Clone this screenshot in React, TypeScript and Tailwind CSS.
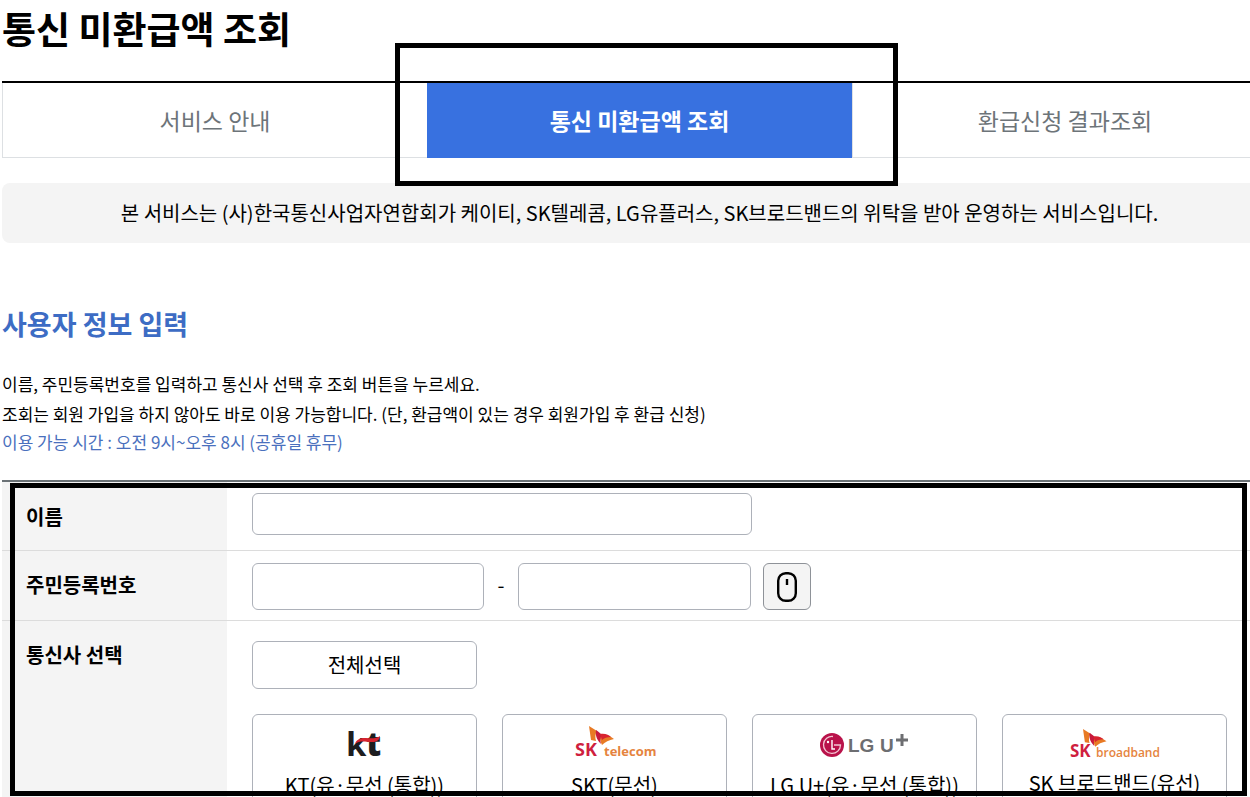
import React, { useState } from 'react';

const KtLogo = () => (
  <svg width="100" height="40" viewBox="0 0 100 40" className="overflow-visible" role="img" aria-label="kt">
    <text x="31" y="32" fontSize="33" fontWeight="700" fill="#1d1d1f" fontFamily="'Open Sans', sans-serif">k</text>
    <text x="51" y="32" fontSize="33" fontWeight="800" fill="#1d1d1f" fontFamily="'Open Sans', sans-serif">t</text>
    <path d="M40 20c1-4 5-6.500 11-6 6 .500 11 .500 14-2-.500 4-3 6-8 6-7 0-12-2-17 2z" fill="#d5232f" />
  </svg>
);

const SkWings = () => (
  <>
    <path d="M0 0L8 5C6 8 6 12 7 15L2 14Z" fill="#e87a24" />
    <path d="M7 4C10 6 12 8 14 10C12 11 11 14 12 18C9 15 6 11 7 4Z" fill="#c8193c" />
    <path d="M13 9C17 8 21 10 25 13C20 14 16 16 13 19C11 15 11 11 13 9Z" fill="#e87a24" />
    <path d="M11 8C16 7 20 9 22 11C18 11 15 12 13 14Z" fill="#d8232f" />
  </>
);

const SkTelecomLogo = () => (
  <svg width="100" height="40" viewBox="0 0 100 40" className="overflow-visible" role="img" aria-label="SK telecom">
    <g transform="translate(24 2)">
      <SkWings />
    </g>
    <text x="10" y="32" fontSize="18" fontWeight="700" fill="#cf1f3f" fontFamily="'Open Sans', sans-serif">SK</text>
    <text x="39" y="32" fontSize="13" fontWeight="700" fill="#e58440" fontFamily="'Open Sans', sans-serif">telecom</text>
  </svg>
);

const LgLogo = () => (
  <svg width="100" height="40" viewBox="0 0 100 40" className="overflow-visible" role="img" aria-label="LG U+">
    <circle cx="17" cy="21" r="12" fill="#b9124a" />
    <path d="M18 12.500A8.500 8.500 0 1 0 25.500 21H19" fill="none" stroke="#f3c6d3" strokeWidth="1.300" />
    <path d="M17 16v9h3" fill="none" stroke="#fff" strokeWidth="1.400" />
    <circle cx="13" cy="18" r="1.200" fill="#fff" />
    <text x="33" y="28" fontSize="19" fontWeight="700" fill="#6d6e71" fontFamily="'Liberation Sans', sans-serif">LG</text>
    <text x="65" y="28" fontSize="19" fontWeight="700" fill="#6d6e71" fontFamily="'Liberation Sans', sans-serif">U</text>
    <path d="M81 16h12M87 10v12" stroke="#6d6e71" strokeWidth="3" />
  </svg>
);

const SkBroadbandLogo = () => (
  <svg width="100" height="38" viewBox="0 0 100 38" className="overflow-visible" role="img" aria-label="SK broadband">
    <g transform="translate(18 5) scale(0.940)">
      <SkWings />
    </g>
    <text x="5" y="33" fontSize="17" fontWeight="700" fill="#cf1f3f" fontFamily="'Open Sans', sans-serif">SK</text>
    <text x="31" y="33" fontSize="12" fontWeight="600" fill="#e58440" fontFamily="'Open Sans', sans-serif">broadband</text>
  </svg>
);

const tabs = ['서비스 안내', '통신 미환급액 조회', '환급신청 결과조회'];

const carriers = [
  { id: 'kt', label: 'KT(유·무선 (통합))', Logo: KtLogo },
  { id: 'skt', label: 'SKT(무선)', Logo: SkTelecomLogo },
  { id: 'lgu', label: 'LG U+(유·무선 (통합))', Logo: LgLogo },
  { id: 'skb', label: 'SK 브로드밴드(유선)', Logo: SkBroadbandLogo },
];

const inputClass = 'rounded-md border border-[#adb1b9] bg-white px-3 text-xl outline-none focus:border-[#3871e0]';
const labelClass = 'w-[225px] shrink-0 bg-[#f4f4f4] pl-6 text-xl leading-[30px] font-bold';

const App: React.FC = () => {
  const [activeTab, setActiveTab] = useState(1);
  const [name, setName] = useState('');
  const [selected, setSelected] = useState<string[]>([]);

  const toggleCarrier = (id: string) => {
    setSelected(prev => (prev.includes(id) ? prev.filter(item => item !== id) : [...prev, id]));
  };

  const toggleAll = () => {
    setSelected(prev => (prev.length === carriers.length ? [] : carriers.map(carrier => carrier.id)));
  };

  return (
    <div className="h-screen overflow-hidden bg-white font-['Noto_Sans_CJK_KR',sans-serif] text-black">
      <main className="-mr-[27px] ml-0.5 flex h-full flex-col">
        <h1 className="pb-[25px] text-[37px] leading-14 font-bold">통신 미환급액 조회</h1>

        {/* Tabs */}
        <nav className="grid shrink-0 grid-cols-3 border-t-2 border-black">
          {tabs.map((tab, index) => (
            <div key={tab} className="relative">
              <button
                type="button"
                onClick={() => setActiveTab(index)}
                className={`h-[75px] w-full text-[23px] ${
                  activeTab === index
                    ? 'bg-[#3871e0] font-bold text-white'
                    : 'border-b border-l border-[#dde0e3] text-[#6d7479]'
                }`}
              >
                {tab}
              </button>
              {index === 1 && (
                <div className="pointer-events-none absolute -top-10 -right-[46px] -bottom-7 -left-8 z-10 border-5 border-black"></div>
              )}
            </div>
          ))}
        </nav>

        <p className="mt-[25px] shrink-0 rounded-lg bg-[#f4f4f4] text-center text-xl leading-[60px]">
          본 서비스는 (사)한국통신사업자연합회가 케이티, SK텔레콤, LG유플러스, SK브로드밴드의 위탁을 받아 운영하는 서비스입니다.
        </p>

        <h2 className="mt-[61px] text-[27px] leading-10 font-bold text-[#3d6cc4]">사용자 정보 입력</h2>
        <div className="mt-[25px] text-[17px] leading-[30px]">
          <p>이름, 주민등록번호를 입력하고 통신사 선택 후 조회 버튼을 누르세요.</p>
          <p>조회는 회원 가입을 하지 않아도 바로 이용 가능합니다. (단, 환급액이 있는 경우 회원가입 후 환급 신청)</p>
          <p className="leading-[26px] text-[#4a70bd]">이용 가능 시간 : 오전 9시~오후 8시 (공휴일 휴무)</p>
        </div>

        {/* User form */}
        <form className="relative mt-[25px] min-h-0 flex-1 border-t-2 border-[#6b7276]" onSubmit={e => e.preventDefault()}>
          <div className="flex h-full flex-col overflow-hidden">
            <div className="flex shrink-0 border-b border-[#dcdcdc]">
              <label htmlFor="name" className={`${labelClass} pt-5`}>이름</label>
              <div className="px-[25px] pt-[11px] pb-[15px]">
                <input
                  id="name"
                  type="text"
                  value={name}
                  onChange={e => setName(e.target.value)}
                  className={`${inputClass} block h-[42px] w-[500px]`}
                />
              </div>
            </div>

            <div className="flex shrink-0 border-b border-[#dcdcdc]">
              <label htmlFor="rrn-front" className={`${labelClass} pt-[19px]`}>주민등록번호</label>
              <div className="flex items-center px-[25px] pt-3 pb-2.5">
                <input id="rrn-front" type="text" maxLength={6} className={`${inputClass} h-[47px] w-[232px]`} />
                <span className="w-[34px] pb-1 text-center text-xl">-</span>
                <input
                  type="password"
                  maxLength={7}
                  aria-label="주민등록번호 뒷자리"
                  className={`${inputClass} h-[47px] w-[233px]`}
                />
                <button
                  type="button"
                  aria-label="마우스 입력"
                  className="ml-3 flex h-[47px] w-12 items-center justify-center rounded-md border border-[#8e9298] bg-[#f4f4f4]"
                >
                  <svg width="20" height="30" viewBox="0 0 20 30" fill="none" stroke="#000" strokeWidth="2.400">
                    <rect x="1.200" y="1.200" width="17.600" height="27.600" rx="7.500" />
                    <path d="M10 7v6" />
                  </svg>
                </button>
              </div>
            </div>

            <div className="flex min-h-0 flex-1">
              <div className={`${labelClass} pt-[19px]`}>통신사 선택</div>
              <div className="flex-1 pt-5 pr-[50px] pl-[25px]">
                <div className="grid grid-cols-4 gap-[25px]">
                  <button
                    type="button"
                    onClick={toggleAll}
                    className="col-start-1 h-12 rounded-md border border-[#adb1b9] text-xl"
                  >
                    전체선택
                  </button>
                  {carriers.map(({ id, label, Logo }, index) => (
                    <button
                      key={id}
                      type="button"
                      aria-pressed={selected.includes(id)}
                      onClick={() => toggleCarrier(id)}
                      className={`flex flex-col items-center rounded-md border pt-[9px] pb-4 text-xl leading-[30px] whitespace-nowrap ${
                        index === 0 ? 'col-start-1' : ''
                      } ${selected.includes(id) ? 'border-[#3871e0]' : 'border-[#adb1b9]'}`}
                    >
                      <Logo />
                      <span className="mt-1.5">{label}</span>
                    </button>
                  ))}
                </div>
              </div>
            </div>
          </div>
          <div className="pointer-events-none absolute top-px right-[30px] bottom-px left-2 border-5 border-black"></div>
        </form>
      </main>
    </div>
  );
};

export default App;
